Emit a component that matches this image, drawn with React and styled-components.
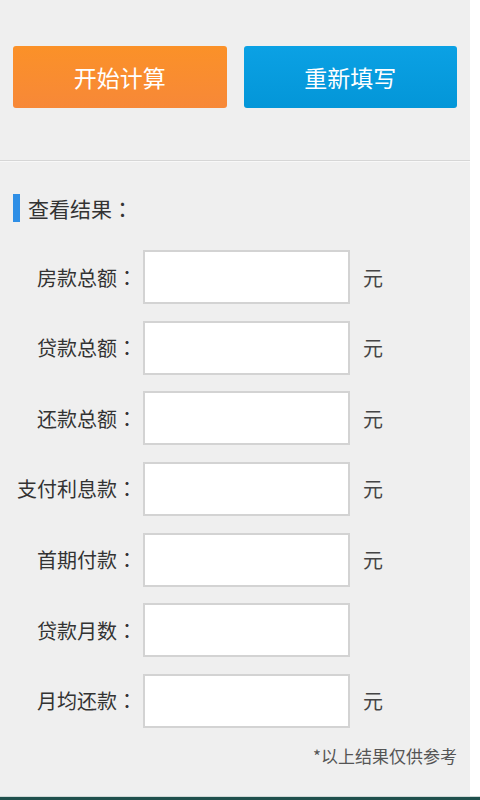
import React from "react";
import styled, { createGlobalStyle } from "styled-components";

const Global = createGlobalStyle`
  html, body { margin: 0; padding: 0; background: #ffffff; }
  body { font-family: "Noto Sans CJK SC", "Noto Sans", sans-serif; }
  * { box-sizing: border-box; }
`;

const Page = styled.div`
  width: 480px;
  height: 800px;
  display: flex;
  flex-direction: column;
  background: #ffffff;
  overflow: hidden;
`;

const Content = styled.div`
  width: 470px;
  height: 796px;
  background: #efefef;
  padding-top: 46px;
  display: flex;
  flex-direction: column;
`;

const BottomBar = styled.div`
  height: 4px;
  background: #1f4f4c;
  border-top: 1px solid #cfd8d6;
`;

const ButtonRow = styled.div`
  display: flex;
  gap: 17px;
  padding: 0 13px;
`;

const ActionButton = styled.button`
  width: 214px;
  height: 62px;
  border: none;
  border-radius: 3px;
  color: #ffffff;
  font-family: "Noto Sans CJK SC", sans-serif;
  font-size: 23px;
  display: flex;
  align-items: center;
  justify-content: center;
  padding: 0;
  background: ${(p) =>
    p.$variant === "orange"
      ? "linear-gradient(#fb9128, #f78838)"
      : "linear-gradient(#0ba1e4, #0396d8)"};
`;

const Divider = styled.div`
  margin-top: 52px;
  height: 2px;
  border-top: 1px solid #d6d6d6;
  border-bottom: 1px solid #f8f8f8;
`;

const Heading = styled.div`
  margin-top: 32px;
  margin-left: 13px;
  display: flex;
  align-items: center;
  gap: 8px;
  height: 28px;
  font-size: 21px;
  color: #333333;
`;

const HeadingBar = styled.span`
  width: 7px;
  height: 28px;
  background: #2f8fe6;
`;

const Colon = styled.span`
  font-family: "Noto Sans CJK TC", "Noto Sans CJK SC", sans-serif;
`;

const Rows = styled.div`
  margin-top: 28px;
  display: grid;
  grid-template-columns: 137px 207px auto;
  row-gap: 16.67px;
  align-items: center;
`;

const Label = styled.label`
  grid-column: 1;
  text-align: right;
  font-size: 20px;
  color: #333333;
  white-space: nowrap;
`;

const Field = styled.input`
  grid-column: 2;
  margin-left: 6px;
  width: 207px;
  height: 54px;
  border: 2px solid #d3d3d3;
  background: #ffffff;
  outline: none;
`;

const Unit = styled.span`
  grid-column: 3;
  padding-left: 19px;
  font-size: 20px;
  color: #444444;
`;

const Note = styled.div`
  margin-top: 16px;
  padding-right: 13px;
  text-align: right;
  font-size: 17px;
  line-height: 24px;
  color: #555555;
`;

const rows = [
  { label: "房款总额", unit: "元" },
  { label: "贷款总额", unit: "元" },
  { label: "还款总额", unit: "元" },
  { label: "支付利息款", unit: "元" },
  { label: "首期付款", unit: "元" },
  { label: "贷款月数", unit: "" },
  { label: "月均还款", unit: "元" },
];

export default function App() {
  return (
    <>
      <Global />
      <Page>
        <Content>
          <ButtonRow>
            <ActionButton $variant="orange">开始计算</ActionButton>
            <ActionButton $variant="blue">重新填写</ActionButton>
          </ButtonRow>
          <Divider />
          <Heading>
            <HeadingBar />
            <span>
              查看结果<Colon>：</Colon>
            </span>
          </Heading>
          <Rows>
            {rows.map((r) => (
              <React.Fragment key={r.label}>
                <Label>
                  {r.label}
                  <Colon>：</Colon>
                </Label>
                <Field readOnly />
                <Unit>{r.unit}</Unit>
              </React.Fragment>
            ))}
          </Rows>
          <Note>*以上结果仅供参考</Note>
        </Content>
        <BottomBar />
      </Page>
    </>
  );
}
